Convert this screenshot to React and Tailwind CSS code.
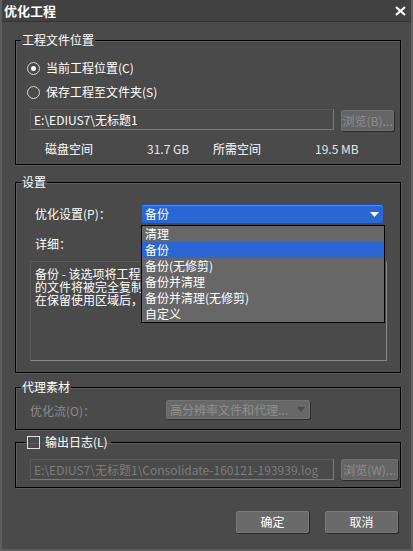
import React from "react";

const FONT = { fontFamily: '"Noto Sans CJK SC", "Noto Sans", sans-serif' };

function Radio({ checked, label }) {
  return (
    <div className="flex items-center h-[16px] pl-[11px] gap-[6px]">
      <span className="w-[13px] h-[13px] rounded-full border border-[#d8d8d8] bg-[#4a4a4a] flex items-center justify-center">
        {checked && <span className="w-[5px] h-[5px] rounded-full bg-white" />}
      </span>
      <span className="text-white text-[12px] leading-[16px]">{label}</span>
    </div>
  );
}

function PathBox({ text, disabled }) {
  return (
    <div
      className={`w-[304px] h-[21px] border border-[#7a7a7a] border-t-[#5a5a5a] border-l-[#5a5a5a] flex items-center pl-[3px] text-[12px] leading-[16px] whitespace-nowrap overflow-hidden ${
        disabled ? "text-[#7d7d7d]" : "text-white"
      }`}
    >
      {text}
    </div>
  );
}

function BrowseButton({ label, width }) {
  return (
    <div
      className={`${width} h-[21px] rounded-[2px] bg-[#656565] border border-[#707070] shadow-[1px_1px_0_#2a2a2a] flex items-center justify-center text-[12px] text-[#8e8e8e]`}
    >
      {label}
    </div>
  );
}

function Group({ legend, children, className = "" }) {
  return (
    <fieldset className={`border border-black shadow-[inset_1px_1px_0_#5c5c5c,1px_1px_0_#5c5c5c] ${className}`}>
      <legend className="ml-[5px] px-[1px] h-[16px] text-white text-[12px] leading-[16px]">
        {legend}
      </legend>
      {children}
    </fieldset>
  );
}

const OPTIONS = ["清理", "备份", "备份(无修剪)", "备份并清理", "备份并清理(无修剪)", "自定义"];

export default function App() {
  return (
    <div
      style={FONT}
      className="w-[413px] h-[551px] bg-[#4a4a4a] flex flex-col border-l-2 border-r-2 border-b-2 border-l-[#5e5e5e] border-r-[#626262] border-b-[#5e5e5e] overflow-hidden select-none"
    >
      {/* title bar */}
      <div className="h-[22px] bg-[#414141] border-b border-[#333] flex items-center justify-between pl-[4px] pr-[6px] shrink-0 -mx-[2px]">
        <span className="text-white text-[13px] font-bold leading-[16px]">优化工程</span>
        <svg width="11" height="10" viewBox="0 0 11 10" className="mr-[1px]">
          <path d="M1 1 L10 9 M10 1 L1 9" stroke="#fff" strokeWidth="2.2" />
        </svg>
      </div>

      <div className="flex flex-col pl-[13px] pr-[10px]">
        {/* project location */}
        <Group legend="工程文件位置" className="mt-[10px]">
          <div className="flex flex-col pt-[12px] pb-[7px]">
            <Radio checked label="当前工程位置(C)" />
            <div className="mt-[8px]">
              <Radio label="保存工程至文件夹(S)" />
            </div>
            <div className="mt-[9px] ml-[14px] flex items-start gap-[7px]">
              <PathBox text="E:\EDIUS7\无标题1" />
              <div className="mt-[1px]">
                <BrowseButton label="浏览(B)..." width="w-[53px]" />
              </div>
            </div>
            <div className="mt-[10px] flex items-center h-[16px] pl-[29px] text-[12px] leading-[16px] text-white">
              <span className="w-[102px]">磁盘空间</span>
              <span className="w-[66px] text-[#e6e6e6]">31.7 GB</span>
              <span className="w-[102px]">所需空间</span>
              <span className="text-[#e6e6e6]">19.5 MB</span>
            </div>
          </div>
        </Group>

        {/* settings */}
        <Group legend="设置" className="mt-[9px]">
          <div className="flex flex-col pt-[14px] pb-[11px]">
            <div className="flex items-center pl-[19px] h-[20px]">
              <span className="w-[106px] text-white text-[12px] leading-[16px]">优化设置(P)：</span>
              <div className="relative">
                <div className="w-[243px] h-[20px] rounded-[3px] bg-[#2a67d4] border border-[#1d4ea8] shadow-[inset_0_1px_0_#5a8ce6] flex items-center justify-between pl-[3px] pr-[4px]">
                  <span className="text-white text-[12px] leading-[16px]">备份</span>
                  <svg width="9" height="5" viewBox="0 0 9 5">
                    <path d="M0 0 H9 L4.5 5 Z" fill="#fff" />
                  </svg>
                </div>
                {/* open list */}
                <div className="absolute left-0 top-[21px] z-10 w-[244px] bg-[#676767] border border-black flex flex-col">
                  {OPTIONS.map((o, i) => (
                    <div
                      key={o}
                      className={`h-[16px] pl-[3px] text-[12px] leading-[16px] text-white ${
                        i === 1 ? "bg-[#2a67d4]" : ""
                      }`}
                    >
                      {o}
                    </div>
                  ))}
                </div>
              </div>
            </div>
            <div className="mt-[12px] pl-[19px] h-[16px] text-white text-[12px] leading-[16px]">详细：</div>
            <div className="mt-[9px] ml-[14px] w-[357px] h-[100px] border border-[#8a8a8a] border-t-[#5a5a5a] border-l-[#5a5a5a] px-[4px] pt-[5px] text-white text-[12px] leading-[13px] whitespace-pre overflow-hidden">
              {"备份 - 该选项将工程文件和素材复制到指定位置。\n的文件将被完全复制到新位置，并不进行修剪。\n在保留使用区域后，未使用的部分将被删除。"}
            </div>
          </div>
        </Group>

        {/* proxy */}
        <Group legend="代理素材" className="mt-[6px]">
          <div className="flex items-center pt-[5px] pb-[10px] pl-[14px]">
            <span className="w-[136px] text-[#8c8c8c] text-[12px] leading-[16px] mt-[3px]">优化流(O)：</span>
            <div className="w-[144px] h-[19px] rounded-[2px] bg-[#686868] border border-[#727272] shadow-[1px_1px_0_#2e2e2e] flex items-center justify-between pl-[3px] pr-[4px]">
              <span className="text-[#8e8e8e] text-[12px] leading-[16px]">高分辨率文件和代理...</span>
              <svg width="8" height="5" viewBox="0 0 8 5">
                <path d="M0 0 H8 L4 5 Z" fill="#4a4a4a" />
              </svg>
            </div>
          </div>
        </Group>

        {/* log output */}
        <fieldset className="mt-[4px] border border-black shadow-[inset_1px_1px_0_#5c5c5c,1px_1px_0_#5c5c5c]">
          <legend className="ml-[10px] px-[1px] h-[16px] flex items-center gap-[5px] text-white text-[12px] leading-[16px]">
            <span className="w-[13px] h-[13px] border border-[#e0e0e0]" />
            <span className="pr-[2px]">输出日志(L)</span>
          </legend>
          <div className="flex items-start gap-[7px] pl-[14px] pt-[9px] pb-[7px]">
            <PathBox disabled text="E:\EDIUS7\无标题1\Consolidate-160121-193939.log" />
            <BrowseButton label="浏览(W)..." width="w-[57px]" />
          </div>
        </fieldset>
      </div>

      {/* dialog buttons */}
      <div className="flex justify-end gap-[16px] mt-[23px] pr-[13px]">
        {["确定", "取消"].map((t) => (
          <div
            key={t}
            className="w-[73px] h-[22px] rounded-[2px] bg-[#6a6a6a] border border-[#7a7a7a] shadow-[1px_1px_0_#262626] flex items-center justify-center text-white text-[12px] leading-[16px]"
          >
            {t}
          </div>
        ))}
      </div>
    </div>
  );
}
